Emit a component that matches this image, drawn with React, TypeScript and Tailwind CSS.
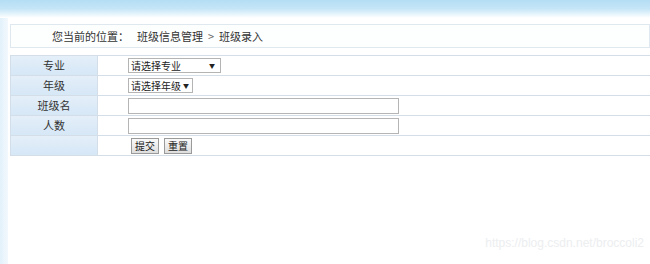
import React from 'react';

const font = { fontFamily: '"Noto Sans CJK SC", "Liberation Sans", sans-serif' };

function FakeSelect({ label, width }: { label: string; width: string }) {
  return (
    <div className={`flex items-center justify-between h-[15px] border border-[#b4b4b4] bg-white pl-[2px] pr-[5px] text-[10px] leading-none text-[#222] whitespace-nowrap ${width}`}>
      <span>{label}</span>
      <span className="text-[6px] ml-[2px]">▼</span>
    </div>
  );
}

const btn =
  'h-[16px] px-[3px] border border-[#9a9a9a] bg-gradient-to-b from-[#fafafa] to-[#dedede] text-[10px] leading-none text-[#222]';

const rows = [
  { label: '专业', field: <FakeSelect label="请选择专业" width="w-[93px]" /> },
  { label: '年级', field: <FakeSelect label="请选择年级" width="w-[65px]" /> },
  { label: '班级名', field: <div className="w-[271px] h-[16px] border border-[#b5b5b5] bg-white" /> },
  { label: '人数', field: <div className="w-[271px] h-[16px] border border-[#b5b5b5] bg-white" /> },
  {
    label: '',
    field: (
      <div className="flex gap-[5px] pl-[3px]">
        <button className={btn}>提交</button>
        <button className={btn}>重置</button>
      </div>
    ),
  },
];

export default function App() {
  return (
    <div className="relative w-[650px] h-[264px] bg-white overflow-hidden flex flex-col" style={font}>
      <div className="h-[18px] shrink-0 bg-gradient-to-b from-[#b4ddf4] via-[#c6e6f7] to-white" />
      <div className="flex flex-1">
        <div className="w-[8px] bg-gradient-to-r from-[#e2f1fb] to-[#f3f9fd]" />
        <div className="flex-1 pl-[2px] pt-[6px]">
          <div className="h-[24px] border border-[#dfe8ef] bg-[#fdfefe] flex items-center pl-[41px] text-[11px] text-[#333]">
            <span>您当前的位置：</span>
            <span className="ml-[8px]">班级信息管理</span>
            <span className="mx-[5px] text-[#666]">&gt;</span>
            <span>班级录入</span>
          </div>
          <div className="mt-[7px] border-t border-[#d4dee8]">
            {rows.map((r, i) => (
              <div key={i} className="flex h-[20px] border-b border-[#d4dee8]">
                <div className="w-[88px] border-l border-r border-[#d4dee8] bg-gradient-to-b from-[#e4eff9] to-[#d6e7f6] flex items-center justify-center text-[11px] text-[#333]">
                  {r.label}
                </div>
                <div className="flex-1 flex items-center pl-[30px]">{r.field}</div>
              </div>
            ))}
          </div>
        </div>
      </div>
      <div className="absolute right-[6px] bottom-[12px] text-[12px] text-[#eceef0]" style={{ fontFamily: '"Liberation Sans", sans-serif' }}>
        https://blog.csdn.net/broccoli2
      </div>
    </div>
  );
}
